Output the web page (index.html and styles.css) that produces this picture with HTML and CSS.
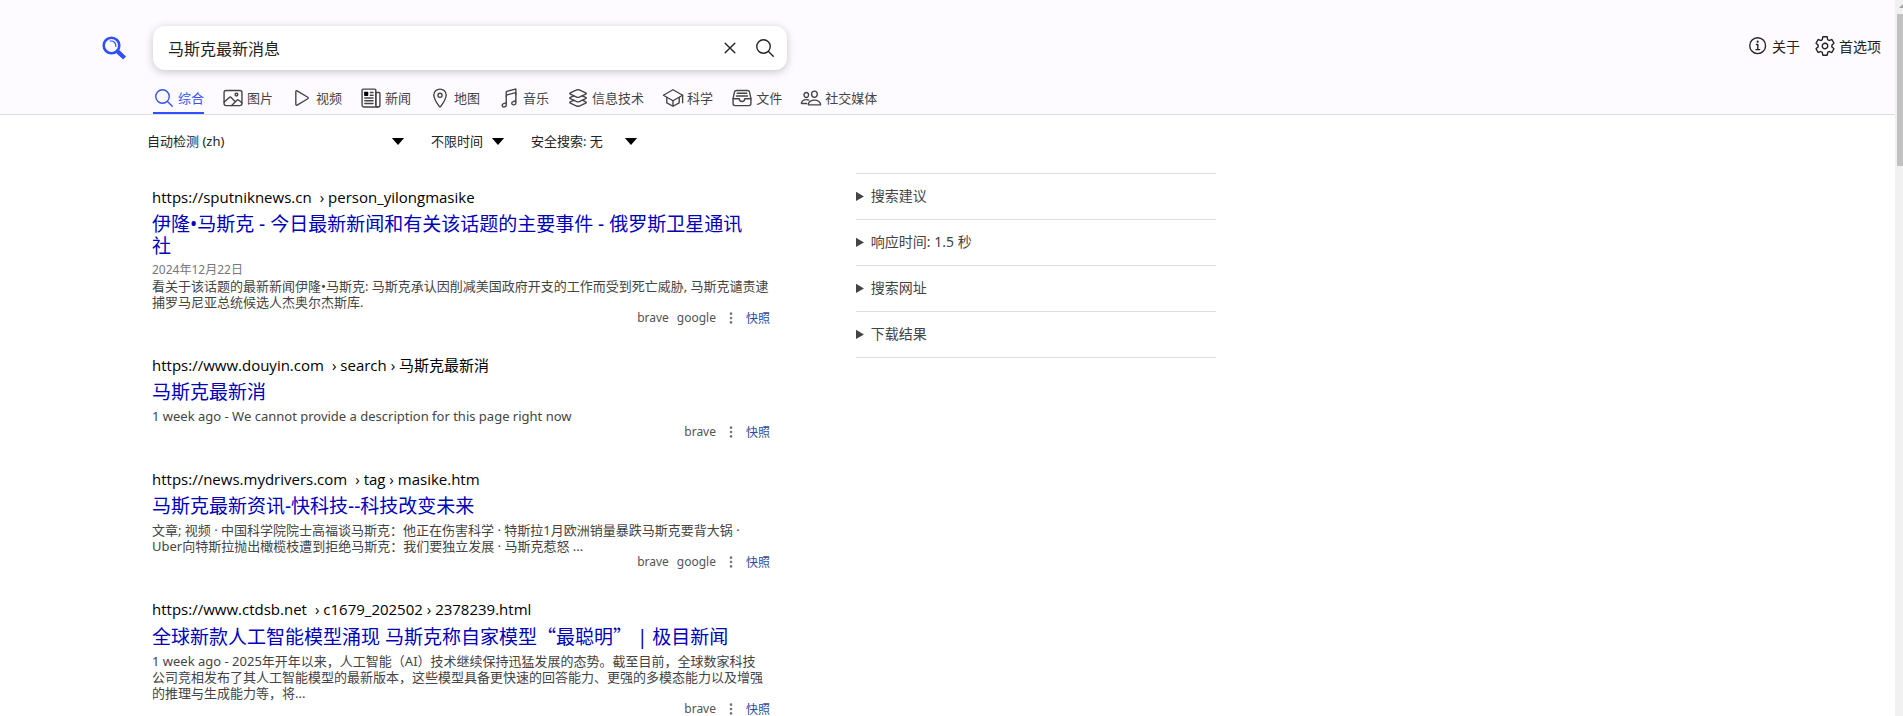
FILE: index.html
```html
<!DOCTYPE html>
<html lang="zh-CN">
<head>
  <meta charset="UTF-8">
  <meta name="viewport" content="width=device-width, initial-scale=1.0">
  <title>马斯克最新消息 - SearXNG</title>
  <link rel="stylesheet" href="styles.css">
</head>
<body>
  <form id="search" action="#" method="get">
    <header class="header">
      <div class="search-row">
        <a class="logo" href="#" aria-label="SearXNG">
          <svg viewBox="0 0 24 24">
            <circle cx="9.5" cy="9.5" r="7.8" stroke-width="2.6"/>
            <path d="M7.8 5.2a4.8 4.8 0 0 1 6 5.6" stroke-width="1.2"/>
            <path d="M15.6 15.4l7 6.6" stroke-width="4.2"/>
          </svg>
        </a>
        <div class="search-box">
          <input type="text" name="q" value="马斯克最新消息" aria-label="搜索" autocomplete="off">
          <button type="reset" aria-label="清空">
            <svg class="icon" viewBox="0 0 512 512"><path d="M368 368L144 144M368 144L144 368"/></svg>
          </button>
          <button type="submit" aria-label="搜索">
            <svg class="icon" viewBox="0 0 512 512"><path d="M221.09 64a157.09 157.09 0 10157.09 157.09A157.1 157.1 0 00221.09 64zM338.29 338.29L448 448"/></svg>
          </button>
        </div>
        <nav class="links">
          <a href="#">
            <svg class="icon" viewBox="0 0 512 512"><path d="M248 64C146.39 64 64 146.39 64 248s82.39 184 184 184 184-82.39 184-184S349.61 64 248 64zM220 220h32v116M208 340h88"/><circle class="fill" cx="248" cy="156" r="26"/></svg>
            <span>关于</span>
          </a>
          <a href="#">
            <svg class="icon" viewBox="0 0 512 512"><path d="M262.29 192.31a64 64 0 1057.4 57.4 64.13 64.13 0 00-57.4-57.4zM416.39 256a154.34 154.34 0 01-1.53 20.79l45.21 35.46a10.81 10.81 0 012.45 13.75l-42.77 74a10.81 10.81 0 01-13.14 4.59l-44.9-18.08a16.11 16.11 0 00-15.17 1.75A164.48 164.48 0 01325 400.8a15.94 15.94 0 00-8.82 12.14l-6.73 47.89a11.08 11.08 0 01-10.68 9.17h-85.54a11.11 11.11 0 01-10.69-8.87l-6.72-47.82a16.07 16.07 0 00-9-12.22 155.3 155.3 0 01-21.46-12.57 16 16 0 00-15.11-1.71l-44.89 18.07a10.81 10.81 0 01-13.14-4.58l-42.77-74a10.8 10.8 0 012.45-13.75l38.21-30a16.05 16.05 0 006-14.08c-.36-4.17-.58-8.33-.58-12.5s.21-8.27.58-12.35a16 16 0 00-6.07-13.94l-38.19-30A10.81 10.81 0 0149.48 186l42.77-74a10.81 10.81 0 0113.14-4.59l44.9 18.08a16.11 16.11 0 0015.17-1.75A164.48 164.48 0 01187 111.2a15.94 15.94 0 008.82-12.14l6.73-47.89A11.08 11.08 0 01213.23 42h85.54a11.11 11.11 0 0110.69 8.87l6.72 47.82a16.07 16.07 0 009 12.22 155.3 155.3 0 0121.46 12.57 16 16 0 0015.11 1.71l44.89-18.07a10.81 10.81 0 0113.14 4.58l42.77 74a10.8 10.8 0 01-2.45 13.75l-38.21 30a16.05 16.05 0 00-6.05 14.08c.33 4.14.55 8.3.55 12.47z"/></svg>
            <span>首选项</span>
          </a>
        </nav>
      </div>

      <nav class="categories">
        <a class="active" href="#">
          <svg class="icon" viewBox="0 0 512 512"><path d="M221.09 64a157.09 157.09 0 10157.09 157.09A157.1 157.1 0 00221.09 64zM338.29 338.29L448 448"/></svg>
          <span>综合</span>
        </a>
        <a href="#">
          <svg class="icon" viewBox="0 0 512 512"><rect x="48" y="80" width="416" height="352" rx="48"/><circle cx="336" cy="176" r="32"/><path d="M304 335.79l-90.66-90.49a32 32 0 00-43.87-1.3L48 352M224 432l123.34-123.34a32 32 0 0143.11-2L464 368"/></svg>
          <span>图片</span>
        </a>
        <a href="#">
          <svg class="icon" viewBox="0 0 512 512"><path d="M112 111v290c0 17.44 17 28.52 31 20.16l247.9-148.37c12.12-7.25 12.12-26.33 0-33.58L143 90.84c-14-8.36-31 2.72-31 20.16z"/></svg>
          <span>视频</span>
        </a>
        <a href="#">
          <svg class="icon" viewBox="0 0 512 512"><path d="M368 415.86V72a24.07 24.07 0 00-24-24H72a24.07 24.07 0 00-24 24v352a40.12 40.12 0 0040 40h328"/><path d="M416 464a48 48 0 01-48-48V128h72a24 24 0 0124 24v264a48 48 0 01-48 48zM240 128h64M240 192h64M112 256h192M112 320h192M112 384h192"/><rect class="black" x="96" y="112" width="96" height="96" rx="16"/></svg>
          <span>新闻</span>
        </a>
        <a href="#">
          <svg class="icon" viewBox="0 0 512 512"><path d="M256 48c-79.5 0-144 61.39-144 137 0 87 96 224.87 131.25 272.49a15.77 15.77 0 0025.5 0C304 409.89 400 272.07 400 185c0-75.61-64.5-137-144-137z"/><circle cx="256" cy="192" r="48"/></svg>
          <span>地图</span>
        </a>
        <a href="#">
          <svg class="icon" viewBox="0 0 512 512"><path d="M192 218v-6c0-14.84 10-27 24.24-30.59l174.59-46.68A20 20 0 01416 154v22"/><path d="M416 295.94v80c0 13.91-8.93 25.59-22 30l-22 8c-25.9 8.72-52-10.42-52-38h0a33.37 33.37 0 0123-32l51-18.15c13.07-4.4 22-15.94 22-29.85V58a10 10 0 00-12.6-9.61L204 102a16.48 16.48 0 00-12 16v226c0 13.91-8.93 25.6-22 30l-52 18c-13.88 4.68-22 17.22-22 32h0c0 27.58 26.52 46.55 52 38l22-8c13.07-4.4 22-16.08 22-30v-80"/></svg>
          <span>音乐</span>
        </a>
        <a href="#">
          <svg class="icon" viewBox="0 0 512 512"><path d="M434.8 137.65l-149.36-68.1c-16.19-7.4-42.69-7.4-58.88 0L77.3 137.65c-17.6 8-17.6 21.09 0 29.09l148 67.5c16.89 7.7 44.69 7.7 61.58 0l148-67.5c17.52-8 17.52-21.1-.08-29.09z"/><path d="M160 308.52l-82.7 37.11c-17.6 8-17.6 21.1 0 29.1l148 67.5c16.89 7.69 44.69 7.69 61.58 0l148-67.5c17.6-8 17.6-21.1 0-29.1l-79.94-38.47"/><path d="M160 204.48l-82.8 37.16c-17.6 8-17.6 21.1 0 29.1l148 67.49c16.89 7.7 44.69 7.7 61.58 0l148-67.49c17.7-8 17.7-21.1.1-29.1L352 204.48"/></svg>
          <span>信息技术</span>
        </a>
        <a href="#">
          <svg class="icon" viewBox="0 0 512 512"><path d="M32 192L256 64l224 128-224 128L32 192z"/><path d="M112 240v128l144 80 144-80V240M480 368V192M256 320v128"/></svg>
          <span>科学</span>
        </a>
        <a href="#">
          <svg class="icon" viewBox="0 0 512 512"><path d="M384 80H128c-26 0-43 14-48 40L48 272v112a48.14 48.14 0 0048 48h320a48.14 48.14 0 0048-48V272l-32-152c-5-27-23-40-48-40z"/><path d="M48 272h144M320 272h144M192 272a64 64 0 00128 0M144 144h224M128 208h256"/></svg>
          <span>文件</span>
        </a>
        <a href="#">
          <svg class="icon" viewBox="0 0 512 512"><path d="M402 168c-2.93 40.67-33.1 72-66 72s-63.12-31.32-66-72c-3-42.31 26.37-72 66-72s69 30.46 66 72z"/><path d="M336 304c-65.17 0-127.84 32.37-143.54 95.41-2.08 8.34 3.15 16.59 11.72 16.59h263.65c8.57 0 13.77-8.25 11.72-16.59C463.85 335.36 401.18 304 336 304z"/><path d="M200 185.94c-2.34 32.48-26.72 58.06-53 58.06s-50.7-25.57-53-58.06C91.61 152.15 115.34 128 147 128s55.39 24.77 53 57.94z"/><path d="M206 306c-18.05-8.27-37.93-11.45-59-11.45-52 0-102.1 25.85-114.65 76.2-1.65 6.66 2.53 13.25 9.37 13.25H154"/></svg>
          <span>社交媒体</span>
        </a>
      </nav>
    </header>

    <div class="filters">
      <select class="language" name="language" aria-label="搜索语言">
        <option>自动检测 (zh)</option>
        <option>简体中文 (zh-CN)</option>
      </select>
      <select class="time-range" name="time_range" aria-label="时间范围">
        <option>不限时间</option>
        <option>一天内</option>
      </select>
      <select class="safesearch" name="safesearch" aria-label="安全搜索">
        <option>安全搜索: 无</option>
        <option>安全搜索: 中等</option>
      </select>
    </div>
  </form>

  <main class="content">
    <div class="results">
      <article class="result">
        <a class="url" href="#"><span>https://sputniknews.cn</span> <span>› person_yilongmasike</span></a>
        <h3><a href="#">伊隆•马斯克 - 今日最新新闻和有关该话题的主要事件 - 俄罗斯卫星通讯社</a></h3>
        <time datetime="2024-12-22">2024年12月22日</time>
        <p>看关于该话题的最新新闻伊隆•马斯克: 马斯克承认因削减美国政府开支的工作而受到死亡威胁, 马斯克谴责逮捕罗马尼亚总统候选人杰奥尔杰斯库.</p>
        <div class="engines">
          <span>brave</span><span>google</span>
          <svg viewBox="0 0 512 512"><circle cx="256" cy="96" r="48"/><circle cx="256" cy="256" r="48"/><circle cx="256" cy="416" r="48"/></svg>
          <a href="#">快照</a>
        </div>
      </article>

      <article class="result">
        <a class="url" href="#"><span>https://www.douyin.com</span> <span>› search › 马斯克最新消</span></a>
        <h3><a href="#">马斯克最新消</a></h3>
        <p>1 week ago - We cannot provide a description for this page right now</p>
        <div class="engines">
          <span>brave</span>
          <svg viewBox="0 0 512 512"><circle cx="256" cy="96" r="48"/><circle cx="256" cy="256" r="48"/><circle cx="256" cy="416" r="48"/></svg>
          <a href="#">快照</a>
        </div>
      </article>

      <article class="result">
        <a class="url" href="#"><span>https://news.mydrivers.com</span> <span>› tag › masike.htm</span></a>
        <h3><a href="#">马斯克最新资讯-快科技--科技改变未来</a></h3>
        <p>文章; 视频 · 中国科学院院士高福谈马斯克：他正在伤害科学 · 特斯拉1月欧洲销量暴跌马斯克要背大锅 · Uber向特斯拉抛出橄榄枝遭到拒绝马斯克：我们要独立发展 · 马斯克惹怒 ...</p>
        <div class="engines">
          <span>brave</span><span>google</span>
          <svg viewBox="0 0 512 512"><circle cx="256" cy="96" r="48"/><circle cx="256" cy="256" r="48"/><circle cx="256" cy="416" r="48"/></svg>
          <a href="#">快照</a>
        </div>
      </article>

      <article class="result">
        <a class="url" href="#"><span>https://www.ctdsb.net</span> <span>› c1679_202502 › 2378239.html</span></a>
        <h3><a href="#">全球新款人工智能模型涌现 马斯克称自家模型<span class="quoted">“最聪明”</span> | 极目新闻</a></h3>
        <p>1 week ago - 2025年开年以来，人工智能（AI）技术继续保持迅猛发展的态势。截至目前，全球数家科技<br>公司竞相发布了其人工智能模型的最新版本，这些模型具备更快速的回答能力、更强的多模态能力以及增强的推理与生成能力等，将...</p>
        <div class="engines">
          <span>brave</span>
          <svg viewBox="0 0 512 512"><circle cx="256" cy="96" r="48"/><circle cx="256" cy="256" r="48"/><circle cx="256" cy="416" r="48"/></svg>
          <a href="#">快照</a>
        </div>
      </article>
    </div>

    <aside class="sidebar">
      <details><summary>搜索建议</summary></details>
      <details><summary>响应时间: 1.5 秒</summary></details>
      <details><summary>搜索网址</summary></details>
      <details><summary>下载结果</summary></details>
    </aside>
  </main>

  <div class="scrollbar" aria-hidden="true">
    <svg viewBox="0 0 6 14"><path d="M2 8l4-4v4z"/></svg>
  </div>
</body>
</html>
```
FILE: styles.css
```css
* {
  margin: 0;
  padding: 0;
  box-sizing: border-box;
}

html {
  height: 100%;
  overflow: hidden;
}

body {
  min-height: 100%;
  padding-right: 8px;
  background: #fff;
  color: #444;
  font-family: "Noto Sans", "Noto Sans CJK SC", sans-serif;
  font-size: 14px;
}

a {
  color: inherit;
  text-decoration: none;
}

.icon {
  width: 22px;
  height: 22px;
  flex: none;
  fill: none;
  stroke: currentColor;
  stroke-width: 32;
  stroke-linecap: round;
  stroke-linejoin: round;
}

.icon .fill {
  fill: currentColor;
  stroke: none;
}

.icon .black {
  fill: #000;
  stroke: none;
}

/* header */
.header {
  padding: 26px 14px 0 102px;
  background: #fdfbff;
  border-bottom: 1px solid #ddd;
}

.search-row {
  display: flex;
  align-items: center;
}

.logo {
  width: 51px;
}

.logo svg {
  display: block;
  width: 24px;
  height: 24px;
  fill: none;
  stroke: #3050ff;
}

.search-box {
  display: flex;
  align-items: center;
  width: 634px;
  height: 44px;
  padding: 0 4px 0 15px;
  background: #fff;
  border-radius: 12px;
  box-shadow: 0 2px 8px rgba(34, 38, 46, 0.25);
}

.search-box input {
  flex: 1;
  min-width: 0;
  border: none;
  outline: none;
  background: none;
  color: #222;
  font: inherit;
  font-size: 16px;
}

.search-box button {
  display: flex;
  width: 35px;
  padding: 6px;
  border: none;
  background: none;
  color: #222;
  cursor: pointer;
}

.links {
  display: flex;
  gap: 14px;
  margin-left: auto;
  padding-bottom: 4px;
  color: #222;
}

.links a {
  display: flex;
  align-items: center;
  gap: 3px;
}

.categories {
  display: flex;
  gap: 18px;
  margin: 13px 0 0 51px;
}

.categories a {
  display: flex;
  align-items: center;
  gap: 3px;
  height: 31px;
  border-bottom: 2px solid transparent;
  font-size: 13px;
}

.categories .active {
  color: #3050ff;
  border-color: #3050ff;
}

/* filters */
.filters {
  display: flex;
  gap: 22px;
  padding: 16px 0 0 147px;
}

.filters select {
  height: 20px;
  border: none;
  appearance: none;
  background: url("data:image/svg+xml,%3Csvg xmlns='http://www.w3.org/2000/svg' viewBox='0 0 14 8'%3E%3Cpath d='M0 0h14L7 8z'/%3E%3C/svg%3E") no-repeat right 4px center / 14px 7px;
  color: #222;
  font: inherit;
  font-size: 13px;
}

.language {
  width: 262px;
}

.time-range {
  width: 78px;
}

.safesearch {
  width: 111px;
}

/* results */
.content {
  display: grid;
  grid-template-columns: 618px 360px;
  column-gap: 86px;
  align-items: start;
  padding: 22px 0 0 152px;
}

.results {
  display: flex;
  flex-direction: column;
  gap: 30px;
  padding-top: 14px;
}

.url {
  display: flex;
  gap: 8px;
  color: #000;
  font-family: "Open Sans", "Noto Sans CJK SC", sans-serif;
  font-size: 15px;
  line-height: 20px;
}

.result h3 {
  margin: 6px 0 5px;
  padding-right: 14px;
  color: #0000bb;
  font-size: 19px;
  font-weight: normal;
  line-height: 22px;
}

.quoted {
  font-family: "Noto Sans CJK SC", sans-serif;
}

.result time {
  display: block;
  color: #777;
  font-size: 12px;
  line-height: 16px;
}

.result p {
  font-size: 13px;
  line-height: 16px;
}

.engines {
  display: flex;
  justify-content: flex-end;
  align-items: center;
  gap: 8px;
  height: 15px;
  color: #545454;
  font-size: 12px;
}

.engines svg {
  width: 14px;
  height: 14px;
  fill: #777;
}

.engines a {
  color: #334999;
}

/* sidebar */
.sidebar {
  border-top: 1px solid #ddd;
}

.sidebar details {
  border-bottom: 1px solid #ddd;
}

.sidebar summary {
  padding: 11px 0 13px;
  line-height: 21px;
  cursor: pointer;
}

/* page scroll track with its thumb */
.scrollbar {
  position: fixed;
  top: 0;
  right: 0;
  width: 8px;
  height: 100%;
  padding-left: 2px;
  background: #f1f1f1;
}

.scrollbar svg {
  display: block;
  width: 6px;
  height: 14px;
  fill: #a3a3a3;
}

.scrollbar::after {
  content: "";
  display: block;
  height: 152px;
  background: #c1c1c1;
}
```
